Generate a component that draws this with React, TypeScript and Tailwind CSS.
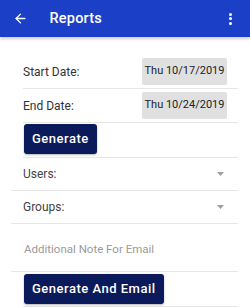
import { ArrowLeft } from "lucide-react"

function Caret() {
  return (
    <svg width="7" height="4" viewBox="0 0 7 4" className="mr-[14px]">
      <path d="M0 0 L7 0 L3.5 4 Z" fill="#9e9e9e" />
    </svg>
  )
}

function DateRow({ label, value }: { label: string; value: string }) {
  return (
    <div className="flex items-center justify-between border-b border-[#e6e6e6] pt-[3px] pb-[3px]">
      <span className="text-[12px] text-[#333]">{label}</span>
      <div className="mr-[11px] flex h-[27px] w-[85px] items-center justify-center rounded-[2px] bg-[#e0e0e0] text-[11px] text-[#222]">
        {value}
      </div>
    </div>
  )
}

function SelectRow({ label }: { label: string }) {
  return (
    <div className="flex h-[33px] items-center justify-between border-b border-[#e6e6e6] pl-3">
      <span className="text-[12px] text-[#444]">{label}</span>
      <Caret />
    </div>
  )
}

export default function App() {
  return (
    <div className="h-[308px] w-[250px] overflow-hidden bg-white font-['Roboto',sans-serif]">
      <header className="relative z-10 flex h-[37px] items-center bg-[#1b3fc6] text-white shadow-[0_2px_3px_rgba(0,0,0,0.2)]">
        <ArrowLeft size={15} strokeWidth={2.2} className="ml-[12.5px]" />
        <h1 className="ml-[22px] text-[14.5px] font-medium tracking-[0.2px]">Reports</h1>
        <div className="ml-auto mr-[18px] flex flex-col gap-[1.5px]">
          <span className="h-[3px] w-[3px] rounded-full bg-white" />
          <span className="h-[3px] w-[3px] rounded-full bg-white" />
          <span className="h-[3px] w-[3px] rounded-full bg-white" />
        </div>
      </header>

      <main className="pl-[11px] pr-[12px] pt-[18px]">
        <div className="ml-3">
          <DateRow label="Start Date:" value="Thu 10/17/2019" />
          <DateRow label="End Date:" value="Thu 10/24/2019" />
          <div className="border-b border-[#e6e6e6] pt-[1px] pb-[3px]">
            <button className="ml-px flex h-[30px] items-center rounded-[3px] bg-[#0b1a5a] px-[8px] text-[13px] font-medium tracking-[0.5px] text-white shadow-[0_1px_2px_rgba(0,0,0,0.3)]">
              Generate
            </button>
          </div>
        </div>

        <SelectRow label="Users:" />
        <SelectRow label="Groups:" />

        <div className="h-[48px] border-b border-[#e6e6e6] pl-[13px] pt-[12px]">
          <span className="text-[11.5px] text-[#9a9a9a]">Additional Note For Email</span>
        </div>

        <div className="ml-3 border-b border-[#e6e6e6] pt-[2px] pb-[2px]">
          <button className="ml-px flex h-[30px] items-center rounded-[3px] bg-[#0b1a5a] px-[8px] text-[13px] font-medium tracking-[0.5px] text-white shadow-[0_1px_2px_rgba(0,0,0,0.3)]">
            Generate And Email
          </button>
        </div>
      </main>
    </div>
  )
}
